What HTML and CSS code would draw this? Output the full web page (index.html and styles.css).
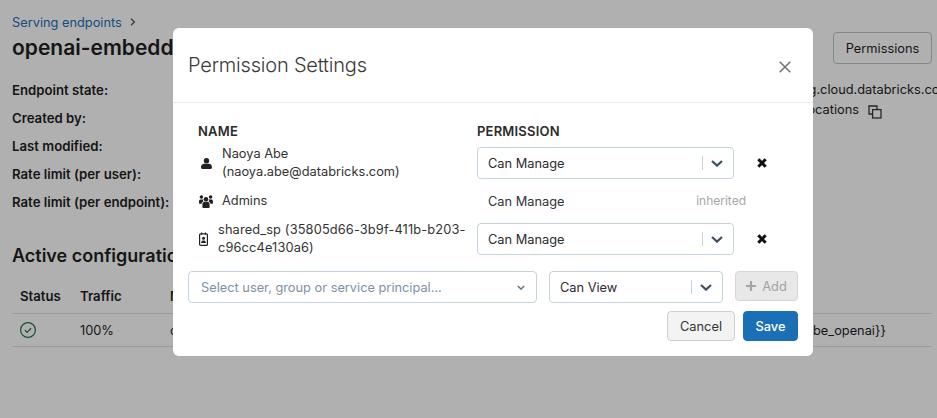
FILE: index.html
```html
<!DOCTYPE html>
<html lang="en">
<head>
    <meta charset="UTF-8">
    <meta name="viewport" content="width=device-width, initial-scale=1.0">
    <title>Permission Settings</title>
    <link rel="stylesheet" href="styles.css">
</head>
<body>
    <div class="page">
        <div class="breadcrumb">
            <a class="crumb-link">Serving endpoints</a>
            <svg class="crumb-sep" viewBox="0 0 6 8" width="6" height="8" fill="none" stroke="#555" stroke-width="1.3"><path d="M1 .8L4.4 4 1 7.2"/></svg>
        </div>
        <div class="title-row">
            <h1 class="page-title">openai-embedding</h1>
            <button type="button" class="btn-outline">Permissions</button>
        </div>
        <div class="details">
            <div class="detail-row"><strong>Endpoint state:</strong><span class="detail-val">abcd.staging.cloud.databricks.com</span></div>
            <div class="detail-row"><strong>Created by:</strong><span class="detail-val detail-copy">invocations
                <svg class="copy-icon" viewBox="0 0 14 14" width="14" height="14" fill="none" stroke="#3a3a3a" stroke-width="1.3"><path d="M9 4V1H1v8h3"/><rect x="4.6" y="4.6" width="8.4" height="8.4"/></svg></span></div>
            <div class="detail-row"><strong>Last modified:</strong></div>
            <div class="detail-row"><strong>Rate limit (per user):</strong></div>
            <div class="detail-row"><strong>Rate limit (per endpoint):</strong></div>
        </div>
        <h2 class="section-title">Active configuration</h2>
        <div class="config-table">
            <div class="config-row config-head">
                <span class="col-status">Status</span>
                <span class="col-traffic">Traffic</span>
                <span class="col-model">Model</span>
            </div>
            <div class="config-row">
                <span class="col-status">
                    <svg viewBox="0 0 16 16" width="16" height="16" fill="none" stroke="#1f7a4d" stroke-width="1.2"><circle cx="8" cy="8" r="7.4"/><path d="M4.9 8.2l2.2 2.2 4-4.2" stroke-width="1.3"/></svg>
                </span>
                <span class="col-traffic">100%</span>
                <span class="col-model">openai</span>
                <span class="col-key">be_openai}}</span>
            </div>
        </div>
    </div>

    <div class="overlay"></div>

    <div class="modal">
        <div class="modal-header">
            <h3 class="modal-title">Permission Settings</h3>
            <svg class="modal-close" viewBox="0 0 12 12" width="12" height="12" fill="none" stroke="#6f6f6f" stroke-width="1.5"><path d="M.7.7l10.6 10.6M11.3.7L.7 11.3"/></svg>
        </div>
        <div class="modal-body">
            <div class="perm-grid">
                <div class="perm-head">NAME</div>
                <div class="perm-head">PERMISSION</div>
                <div></div>

                <div class="perm-name">
                    <svg class="icon-user" viewBox="0 0 11 11" width="11" height="11" fill="#222"><circle cx="5.5" cy="2.7" r="2.7"/><path d="M0 9.3C0 7 1.6 5.8 3 5.8h5c1.4 0 3 1.2 3 3.5 0 1-.6 1.7-1.5 1.7h-8C.6 11 0 10.3 0 9.3z"/></svg>
                    <span>Naoya Abe<br>(naoya.abe@databricks.com)</span>
                </div>
                <div class="select">
                    <span class="select-val">Can Manage</span>
                    <span class="select-sep"></span>
                    <svg class="chevron" viewBox="0 0 12 7" width="12" height="7" fill="none" stroke="#3d4f60" stroke-width="2.2"><path d="M1 1l5 4.6L11 1"/></svg>
                </div>
                <svg class="icon-remove" viewBox="0 0 10 10" width="10" height="10" fill="none" stroke="#111" stroke-width="3"><path d="M1.3 1.3l7.4 7.4M8.7 1.3L1.3 8.7"/></svg>

                <div class="perm-name">
                    <svg class="icon-group" viewBox="0 0 14 13" width="14" height="13" fill="#222"><circle cx="7" cy="4.2" r="2.3"/><circle cx="2.4" cy="2" r="1.8"/><circle cx="11.6" cy="2" r="1.8"/><path d="M3.4 9.4c0-1.9 1.1-2.7 2.2-2.7h2.8c1.1 0 2.2.8 2.2 2.7v2.6c0 .6-.4 1-1 1H4.4c-.6 0-1-.4-1-1z"/><path d="M0 6.4C0 5 .8 4.4 1.6 4.4h1.7c.3 0 .5.1.7.2-.1.9.1 1.4.4 1.8-.9.4-1.6 1.1-1.8 2.4H.7C.3 8.8 0 8.4 0 8zM14 6.4C14 5 13.2 4.4 12.4 4.4h-1.7c-.3 0-.5.1-.7.2.1.9-.1 1.4-.4 1.8.9.4 1.6 1.1 1.8 2.4h1.9c.4 0 .7-.4.7-.8z"/></svg>
                    <span>Admins</span>
                </div>
                <div class="perm-static">
                    <span>Can Manage</span>
                    <span class="inherited">inherited</span>
                </div>
                <div></div>

                <div class="perm-name">
                    <svg class="icon-sp" viewBox="0 0 9 14" width="9" height="14" fill="none"><path d="M2.6.4v2.4M6.4.4v2.4" stroke="#222"/><rect x=".6" y="1.8" width="7.8" height="11.6" rx="1" stroke="#222" stroke-width="1.2"/><circle cx="4.5" cy="6.2" r="1.5" fill="#222"/><path d="M2.1 11c0-1.8 1-2.6 1.8-2.6h1.2c.8 0 1.8.8 1.8 2.6z" fill="#222"/></svg>
                    <span class="sp-name">shared_sp (35805d66-3b9f-411b-b203-<br>c96cc4e130a6)</span>
                </div>
                <div class="select">
                    <span class="select-val">Can Manage</span>
                    <span class="select-sep"></span>
                    <svg class="chevron" viewBox="0 0 12 7" width="12" height="7" fill="none" stroke="#3d4f60" stroke-width="2.2"><path d="M1 1l5 4.6L11 1"/></svg>
                </div>
                <svg class="icon-remove" viewBox="0 0 10 10" width="10" height="10" fill="none" stroke="#111" stroke-width="3"><path d="M1.3 1.3l7.4 7.4M8.7 1.3L1.3 8.7"/></svg>
            </div>

            <div class="add-row">
                <div class="select select-user">
                    <span class="select-val placeholder">Select user, group or service principal...</span>
                    <svg class="chevron-small" viewBox="0 0 10 6" width="8" height="5" fill="none" stroke="#5f7282" stroke-width="1.7"><path d="M1 1l4 4 4-4"/></svg>
                </div>
                <div class="select select-perm">
                    <span class="select-val">Can View</span>
                    <span class="select-sep"></span>
                    <svg class="chevron" viewBox="0 0 12 7" width="12" height="7" fill="none" stroke="#3d4f60" stroke-width="2.2"><path d="M1 1l5 4.6L11 1"/></svg>
                </div>
                <button type="button" class="btn-add" disabled>
                    <svg viewBox="0 0 10 10" width="10" height="10" fill="none" stroke="#a3a3a3" stroke-width="2.2"><path d="M5 0v10M0 5h10"/></svg>
                    Add
                </button>
            </div>

            <div class="modal-footer">
                <button type="button" class="btn-cancel">Cancel</button>
                <button type="button" class="btn-save">Save</button>
            </div>
        </div>
    </div>
</body>
</html>
```

FILE: styles.css
```css
html, body {
    margin: 0;
    height: 100%;
    overflow: hidden;
}
body {
    font-family: Inter, "Liberation Sans", sans-serif;
    font-size: 12.8px;
    color: #1f1f1f;
    background-color: #fff;
}
.page {
    height: 418px;
    padding: 13px 5px 0 12px;
    box-sizing: border-box;
}
.breadcrumb {
    display: flex;
    align-items: center;
    height: 18px;
    gap: 8px;
}
.crumb-link {
    color: #1b70b5;
}
.title-row {
    display: flex;
    justify-content: space-between;
    align-items: flex-start;
    margin-top: 1px;
}
.page-title {
    margin: 3px 0 0;
    font-size: 21px;
    line-height: 26px;
    font-weight: 600;
}
.btn-outline {
    font: inherit;
    color: #1f1f1f;
    background: transparent;
    border: 1px solid #c4c4c4;
    border-radius: 4px;
    width: 99px;
    height: 32px;
    padding: 0;
}
.details {
    margin-top: 12px;
}
.detail-row {
    position: relative;
    height: 28px;
    line-height: 28px;
    white-space: nowrap;
}
.detail-row strong {
    font-size: 13.2px;
    font-weight: 600;
}
.detail-val {
    position: absolute;
    left: 726px;
    top: 0;
}
.detail-copy {
    left: 778px;
    top: -8px;
    display: flex;
    align-items: center;
    gap: 9px;
}
.copy-icon {
    margin-top: 3px;
}
.section-title {
    margin: 27px 0 0;
    font-size: 18px;
    line-height: 26px;
    font-weight: 600;
}
.config-table {
    margin-top: 9px;
}
.config-row {
    display: flex;
    align-items: center;
    height: 32px;
    border-bottom: 1px solid #e0e0e0;
    position: relative;
}
.config-head {
    font-size: 13.2px;
    font-weight: 600;
    height: 35px;
}
.col-status {
    width: 68px;
    box-sizing: border-box;
    padding-left: 8px;
    display: flex;
}
.col-traffic {
    width: 90px;
}
.col-key {
    position: absolute;
    left: 801px;
}
.overlay {
    position: fixed;
    inset: 0;
    background-color: rgba(0, 0, 0, 0.31);
}
.modal {
    position: absolute;
    left: 173px;
    top: 28px;
    width: 640px;
    height: 328px;
    background-color: #fff;
    border-radius: 6px;
}
.modal-header {
    display: flex;
    align-items: center;
    justify-content: space-between;
    height: 74px;
    padding: 0 22px 0 15px;
    border-bottom: 1px solid #ebebeb;
}
.modal-title {
    margin: 0;
    font-size: 20px;
    font-weight: 300;
    letter-spacing: -0.2px;
    color: #3a3a3a;
}
.modal-close {
    margin-top: 3px;
}
.modal-body {
    padding: 18px 15px 0;
}
.perm-grid {
    display: grid;
    grid-template-columns: 279px 257px 1fr;
    grid-template-rows: 20px;
    grid-auto-rows: 32px;
    row-gap: 6px;
    padding-left: 10px;
    align-items: center;
}
.perm-head {
    font-size: 13px;
    line-height: 20px;
    font-weight: 600;
    letter-spacing: 0.2px;
    color: #2b2b2b;
}
.perm-name {
    display: flex;
    align-items: center;
    line-height: 18px;
    color: #333;
    white-space: nowrap;
}
.sp-name {
    letter-spacing: 0.14px;
}
.icon-user { margin: 0 10px 0 3px; }
.icon-group { margin: 0 9px 0 1px; }
.icon-sp { margin: 0 10px 0 1px; }
.select {
    display: flex;
    align-items: center;
    height: 32px;
    box-sizing: border-box;
    border: 1px solid #c5d3e0;
    border-radius: 4px;
    background: #fff;
    padding-left: 10px;
    color: #2b2b2b;
}
.select-val {
    flex: 1;
    white-space: nowrap;
}
.select-sep {
    width: 1px;
    height: 14px;
    background-color: #c5d3e0;
}
.chevron {
    margin: 0 10px 0 8px;
}
.chevron-small {
    margin-right: 11px;
}
.placeholder {
    color: #7d91a3;
    padding-left: 2px;
}
.perm-static {
    display: flex;
    justify-content: space-between;
    align-items: center;
    padding-left: 11px;
    color: #333;
    margin-right: -12px;
}
.inherited {
    color: #a6a6a6;
    font-size: 12px;
    margin-top: -2px;
}
.icon-remove {
    margin-left: 23px;
}
.add-row {
    display: flex;
    align-items: flex-start;
    margin-top: 16px;
}
.select-user {
    width: 349px;
    margin-right: 12px;
}
.select-perm {
    width: 174px;
    margin-right: 12px;
}
.btn-add {
    font: inherit;
    width: 63px;
    height: 30px;
    padding: 0;
    display: flex;
    align-items: center;
    justify-content: center;
    gap: 6px;
    color: #a3a3a3;
    background-color: #e8e8e8;
    border: 1px solid #d6d6d6;
    border-radius: 4px;
}
.modal-footer {
    display: flex;
    justify-content: flex-end;
    gap: 8px;
    margin-top: 8px;
}
.btn-cancel, .btn-save {
    font: inherit;
    height: 30px;
    padding: 0;
    border-radius: 4px;
}
.btn-cancel {
    width: 68px;
    color: #333;
    background-color: #f3f3f3;
    border: 1px solid #cfcfcf;
}
.btn-save {
    width: 55px;
    font-weight: 500;
    color: #fff;
    background-color: #1b70b5;
    border: 1px solid #1b70b5;
}
```
